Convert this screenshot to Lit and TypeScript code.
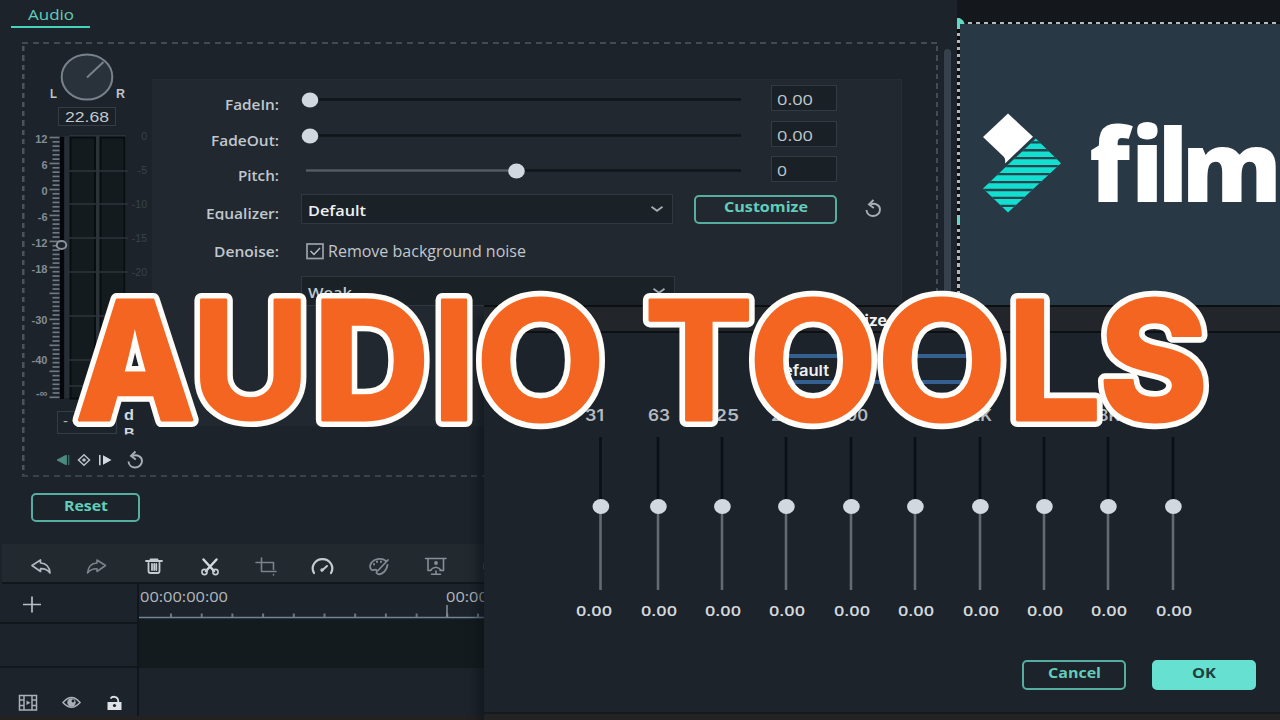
import { LitElement, html, svg, css } from "lit";
import { customElement } from "lit/decorators.js";

const pen = document.createElement("canvas").getContext("2d")!;

/* Places a glyph so that its ink fills the given box. */
function fit(ch: string, font: string, size: number, x0: number, x1: number, y0: number, y1: number) {
  pen.font = font.replace("SIZE", size + "px");
  const m = pen.measureText(ch);
  const sx = (x1 - x0) / (m.actualBoundingBoxRight + m.actualBoundingBoxLeft);
  const sy = (y1 - y0) / (m.actualBoundingBoxAscent + m.actualBoundingBoxDescent);
  const tx = x0 + m.actualBoundingBoxLeft * sx;
  const ty = y1 - m.actualBoundingBoxDescent * sy;
  return `translate(${tx} ${ty}) scale(${sx} ${sy})`;
}

/* A single text run set to an exact width; its baseline is 12px below the top of a 16px line. */
const run = (text: string, width: number, cls = "") =>
  html`<svg class="run ${cls}" width=${width} height="16"><text x="0" y="12" textLength=${width} lengthAdjust="spacingAndGlyphs">${text}</text></svg>`;

const TITLE: [string, number, number, boolean, number][] = [
  ["A", 77, 194, false, 800], ["U", 200, 301, false, 700], ["D", 320.7, 424.5, false, 800], ["I", 440.7, 468, false, 700],
  ["O", 481, 599.5, true, 700], ["T", 648.3, 749, false, 700], ["O", 754, 871.7, true, 700], ["O", 882.3, 1001, true, 700],
  ["L", 1016, 1097, false, 700], ["S", 1102.7, 1203.5, true, 800],
];

const BRAND: [string, number, number, number][] = [
  ["f", 1091, 1133, 123], ["i", 1137, 1158, 122], ["l", 1163.5, 1182, 124.5], ["m", 1187.5, 1276, 147],
];

const BANDS: [string, number][] = [
  ["31", 19], ["63", 22], ["125", 32], ["250", 32], ["500", 32], ["1K", 22], ["2K", 22], ["4K", 22], ["8K", 22], ["16K", 30],
];

const range = (n: number) => Array.from({ length: n }, (_, i) => i);

const undoArrow = svg`<g fill="none" stroke="#a9afb8" stroke-width="1.900"><path d="M5.500 5.500C10 3.500 15 6 15 10.500 15 14.500 11.500 17 8 17 4.500 17 1.800 14.500 1.500 11"/><path d="M8.500 1 4 5.500 8.800 9"/></g>`;

@customElement("app-root")
export class AppRoot extends LitElement {
  static styles = css`
    :host { display: block; width: 1280px; height: 720px; }
    * { box-sizing: border-box; }
    svg { display: block; flex: none; overflow: visible; }
    .run { font: 600 15px "Open Sans", "Noto Sans", sans-serif; fill: #c0c7ce; }
    .screen { position: relative; width: 1280px; height: 720px; overflow: hidden; background: #1c232a; display: grid; grid-template: 544px 1fr / 957px 323px; }
    .audio { padding: 7px 0 0 0; display: flex; flex-direction: column; align-items: flex-start; }
    .tab { width: 79px; height: 21px; margin-left: 11px; padding: 1px 0 0 17px; border-bottom: 2px solid #45d3b9; }
    .run.teal { fill: #62cdb9; }
    .run.tabname { font-weight: 500; font-size: 15px; }
    .body { display: flex; margin: 14px 0 0 22px; }
    .frame { width: 916px; height: 435px; padding: 1px; display: flex;
      background:
        repeating-linear-gradient(90deg, #424b54 0 6px, transparent 6px 10.7px) 0 0 / 100% 2px no-repeat,
        repeating-linear-gradient(90deg, #38424a 0 6px, transparent 6px 10.7px) 0 100% / 100% 2px no-repeat,
        repeating-linear-gradient(180deg, transparent 0 4px, #4b545d 4px 9.3px) 0 0 / 2.5px 100% no-repeat,
        repeating-linear-gradient(180deg, transparent 0 4px, #434c55 4px 9.3px) 100% 0 / 2.5px 100% no-repeat; }
    .bar { width: 7px; height: 290px; margin: 7px 0 0 6px; border-radius: 4px; background: #37404d; }
    .mixer { width: 129px; height: 433px; }
    .mixer text { font-family: "Liberation Sans", Arial, sans-serif; }
    .card { width: 750px; height: 347px; margin-top: 36px; padding-top: 3px; background: #21282f; box-shadow: inset -1px 1px #252c33; }
    .row { display: flex; align-items: center; height: 36px; }
    .row.pitch { height: 34px; }
    .row.eq { height: 42px; }
    .row.noise { height: 42px; }
    .row.level { height: 38px; }
    .name { width: 127px; display: flex; justify-content: flex-end; margin-top: 11px; height: 16px; }
    .name.up { margin-top: 3px; }
    .name.cut { overflow: hidden; height: 13px; margin-top: 8px; }
    .slider { margin-left: 22px; width: 448px; height: 16px; }
    .field { margin: 0 0 4px 22px; width: 66px; height: 26px; padding: 7px 0 0 5px; background: #1a2126; border: 1px solid #323a42; }
    .select { margin-left: 22px; width: 372px; height: 30px; padding: 0 9px 0 6px; background: #1a2127; border: 1px solid #30373e; display: flex; align-items: center; justify-content: space-between; }
    .select .run { margin-top: 6px; }
    .select.wide { width: 374px; }
    .run.white { fill: #eef0f3; }
    .btn { display: flex; justify-content: center; height: 29px; padding-top: 3px; border: 2px solid #55ae9f; border-radius: 5px; }
    .run.bold { font-weight: 700; }
    .customize { width: 143px; margin-left: 21px; }
    .again { margin: 0 0 3px 28px; }
    .check { margin-left: 27px; margin-right: 4px; }
    .check + .run { margin-top: 3px; }
    .run.plain { font-weight: 500; font-size: 15.5px; }
    .run.num { font-size: 14.5px; }
    .reset { width: 109px; margin: 16px 0 0 31px; padding-top: 4px; }

    .preview { background: #14181d; padding: 22px 0 0 0; }
    .stage { height: 283px; padding: 2px 0 0 3px;
      background:
        repeating-linear-gradient(90deg, #b5b8b8 0 4px, #0b0d10 4px 8px) 11px 0 / 100% 2px no-repeat,
        repeating-linear-gradient(180deg, #0b0d10 0 3.5px, #b5b6b4 3.5px 7px) 0 0 / 3px 100% no-repeat; }
    .canvas { height: 281px; background: #283844; }
    .brand { font-family: "Open Sans", sans-serif; font-weight: 800; font-size: 100px; fill: #fff; }

    .timeline { grid-column: 1 / 3; display: flex; flex-direction: column; }
    .tools { height: 40px; margin-left: 2px; background: #22292f; border-bottom: 2px solid #12171b; }
    .tracks { display: grid; grid-template: 40px 44px 1fr / 139px 1fr; height: 132px; }
    .head { border-right: 2px solid #10161a; border-bottom: 2px solid #11171b; }
    .head.last { border-bottom: 0; }
    .lane { background: #141b1e; }
    .floor { height: 4px; background: #242220; }
    .icons { height: 38px; }
    .ruler text { font: 500 14.5px "Open Sans", sans-serif; fill: #b3b9bf; }

    .dialog { position: absolute; left: 484px; top: 305px; width: 796px; height: 415px; background: #1c232a; box-shadow: -8px 8px 10px -2px rgba(12, 18, 24, 0.6); display: flex; flex-direction: column; }
    .title { height: 28px; border-top: 2px solid #0c1013; border-bottom: 2px solid #0c1013; background: #222529; padding: 7px 0 0 320px; }
    .run.inter { font-family: Inter, sans-serif; }
    .preset { width: 220px; height: 30px; margin: 21px 0 0 281px; border-top: 4px solid #34608f; border-bottom: 4px solid #34608f; padding: 6px 0 0 6px; }
    .bands { display: grid; grid-template-columns: repeat(10, 64.4px); margin: 25px 0 0 78px; }
    .band { display: flex; flex-direction: column; align-items: center; }
    .run.hz { font-family: Inter, "Liberation Sans", sans-serif; fill: #b3bac1; font-weight: 600; font-size: 16px; }
    .column { margin: 12px 0 13px; }
    .run.gain { fill: #d3d8dc; }
    .actions { display: flex; justify-content: flex-end; gap: 26px; margin: 40px 24px 0 0; }
    .actions .btn { width: 104px; height: 30px; padding-top: 4px; }
    .btn.ok { background: #66e0d0; border-color: #66e0d0; }
    .run.dark { fill: #20413f; }
    .edge { margin-top: auto; height: 8px; background: #232323; border-top: 2px solid #14191e; }

    .headline { position: absolute; left: 0; top: 0; font: 700 168px Inter, sans-serif; }
    .heavy { font-weight: 800; }
    .outline { fill: #fffdfa; stroke: #fffdfa; stroke-width: 14.5px; stroke-linejoin: round; }
    .fill { fill: #f46522; stroke: #f46522; stroke-width: 3px; stroke-linejoin: round; }
  `;

  private mixer() {
    const labels: [string, number][] = [["12", 139], ["6", 165], ["0", 191], ["-6", 217], ["-12", 243], ["-18", 269], ["-30", 320], ["-40", 360], ["-∞", 393]];
    const right: [string, number][] = [["0", 136], ["-5", 170], ["-10", 204], ["-15", 238], ["-20", 272]];
    return html`<svg class="mixer" viewBox="23 43 129 433">
      <ellipse cx="87" cy="77" rx="25.300" ry="22.500" fill="#29313a" stroke="#78828c" stroke-width="2"/>
      <path d="M87 77.500 103.500 62" stroke="#78828c" stroke-width="2"/>
      <g font-size="12.500" fill="#bdc3ca" font-weight="700"><text x="50" y="98" textLength="7" lengthAdjust="spacingAndGlyphs">L</text><text x="116" y="98" textLength="9" lengthAdjust="spacingAndGlyphs">R</text></g>
      <rect x="58.500" y="107.500" width="57" height="18" fill="#1a2127" stroke="#343d45"/>
      <text x="65" y="122" font-size="15" fill="#c3c9cf" textLength="44" lengthAdjust="spacingAndGlyphs">22.68</text>
      <rect x="60" y="137" width="4" height="262" fill="#05080a"/>
      <rect x="64.500" y="136" width="4.500" height="262" fill="#272e34"/>
      <rect x="69" y="135" width="57" height="263" fill="#2b3238"/>
      <rect x="70.500" y="137.500" width="24.500" height="261" fill="#141b1e" stroke="#080d10" stroke-width="2"/>
      <rect x="100.500" y="137.500" width="24" height="261" fill="#141b1e" stroke="#080d10" stroke-width="2"/>
      ${[171, 204, 238, 272, 316, 360, 386].map((y) => svg`<path d="M69 ${y}H128" stroke="#2c353b" stroke-width="1.500"/>`)}
      ${range(61).map((i) => svg`<path d="M${i % 6 ? 52.5 : 49.5} ${137.5 + i * 4.33}H59.500" stroke="#6f7982" stroke-width="1.700"/>`)}
      <g font-size="11" fill="#838c95" font-weight="700" text-anchor="end">${labels.map(([t, y]) => svg`<text x="47.500" y=${y + 3.5}>${t}</text>`)}</g>
      <g font-size="10.500" fill="#39434a" text-anchor="end">${right.map(([t, y]) => svg`<text x="147" y=${y + 3.5}>${t}</text>`)}</g>
      <ellipse cx="61.500" cy="245" rx="4.800" ry="4" fill="#1c232a" stroke="#8c959e" stroke-width="2"/>
      <rect x="57.500" y="411.500" width="59" height="22" fill="none" stroke="#333d44"/>
      <text x="63" y="426" font-size="15" fill="#a9b0b6">-</text><text x="105" y="428" font-size="15" fill="#a9b0b6">-</text>
      <text x="124" y="419.500" font-size="14.500" font-weight="700" fill="#d3d8dc" textLength="10" lengthAdjust="spacingAndGlyphs">d</text>
      <svg x="124" y="427" width="12" height="7.500" style="overflow:hidden"><text x="0" y="10" font-size="13" font-weight="700" fill="#d3d8dc" textLength="10.500" lengthAdjust="spacingAndGlyphs">B</text></svg>
      <path d="M57 460 65.500 455.500V464.500ZM66.500 455V465M68.800 455V465" fill="#4c8b80" stroke="#4c8b80" stroke-width=".9"/>
      <path d="M84 454.800 89.500 460 84 465.200 78.500 460Z" fill="none" stroke="#b9bfc5" stroke-width="1.500"/><path d="M84 458 86.300 460 84 462 81.700 460Z" fill="#b9bfc5"/>
      <path d="M99.800 455V465.300" stroke="#d5d9dd" stroke-width="1.500"/><path d="M103 455.300 111.500 460 103 464.700Z" fill="#d5d9dd"/>
      <g transform="translate(127 450.500)">${undoArrow}</g>
    </svg>`;
  }

  private slider(pos: number, filled: boolean) {
    return html`<svg class="slider" viewBox="0 0 448 16">
      <path d="M6 7.500H440" stroke="#0f1519" stroke-width="2.500"/>
      ${filled ? svg`<path d="M5 7.500H${pos}" stroke="#555d67" stroke-width="2.600"/>` : ""}
      <ellipse cx=${pos} cy="8" rx="8.300" ry="7.500" fill="#d2d8e0"/></svg>`;
  }

  private chevron() {
    return html`<svg width="12" height="6"><path d="M.5.800 6 4.800 11.500.800" fill="none" stroke="#a4abb3" stroke-width="1.800"/></svg>`;
  }

  private toolbar() {
    return html`<svg class="icons" width="484" height="38" viewBox="2 544 484 38">
      <g fill="none" stroke-linejoin="round" stroke-linecap="round">
        <path d="M32 565.500 40.500 560V563C46 563.300 49.500 567 50 573 47.500 569.500 45 568.500 40.500 568.700V571.500Z" stroke="#b2b8bf" stroke-width="1.700"/>
        <path d="M105.500 565.500 97 560V563C91.500 563.300 88 567 87.500 573 90 569.500 92.500 568.500 97 568.700V571.500Z" stroke="#7b838b" stroke-width="1.600"/>
        <path d="M146 561H162M150.500 560V559.500H157.500V560M148.500 563V571Q148.500 573 150.500 573H157.500Q159.500 573 159.500 571V563M152 564V570M154.200 564V570M156.300 564V570" stroke="#c6ccd2" stroke-width="1.800"/>
        <path d="M203.500 559.500 214 571M216.500 559.500 206 571" stroke="#d4d9de" stroke-width="2.500"/>
        <circle cx="204.500" cy="572" r="2.600" stroke="#c6ccd2" stroke-width="1.600"/><circle cx="215.500" cy="572" r="2.600" stroke="#c6ccd2" stroke-width="1.600"/>
        <path d="M256 562.500H273.500V569.500M261.500 558V571.500H276M273.500 574.500V575" stroke="#7a828a" stroke-width="1.600"/>
        <path d="M314 573A9.800 9.300 0 1 1 331 573" stroke="#c6ccd2" stroke-width="2.200"/><path d="M322 570.500 327 566" stroke="#c6ccd2" stroke-width="2"/><circle cx="322" cy="570" r="1.700" fill="#c6ccd2"/>
        <path d="M386 561C382 557.500 375 558.500 371.500 562.500 368.500 567 371 571 374 569.800 377 569 377 571 376.500 573 379 576 386 573 387.500 565M388 560 378 570.500" stroke="#828a92" stroke-width="1.800"/>
        <path d="M374 564.500V564M377 562V561.500M381 562V561.500" stroke="#828a92" stroke-width="2"/>
        <path d="M425.500 558.500H446M428 559V570.500H431M440 570.500H443.500V559M430 570.500Q436 564 441.500 570.500M436 571V574M431.500 574.300H440.500" stroke="#878f97" stroke-width="1.600"/><circle cx="436" cy="563" r="1.900" fill="#878f97"/>
        <path d="M484.500 564V569" stroke="#757d85" stroke-width="2"/>
      </g></svg>`;
  }

  private logo() {
    return html`<svg width="320" height="281" viewBox="960 24 320 281">
      <path d="M1008 113.500 1033 136.800 1005 163.500Q1005.800 158 1003.500 156.500L983 137Z" fill="#fff"/>
      <clipPath id="para"><path d="M1035.800 138.500 1061 163.300 1008 212.500 983 188.500Z"/></clipPath>
      <g clip-path="url(#para)"><path d="M980 135H1064V215H980Z" fill="#12dfcf"/>
      ${range(9).map((i) => svg`<path d="M980 ${142.3 + i * 7.95}H1064" stroke="#21414b" stroke-width="2.300"/>`)}</g>
      <g class="brand">${BRAND.map(([c, a, b, top]) => svg`<text transform=${fit(c, '800 SIZE "Open Sans"', 100, a, b, top, 201.5)}>${c}</text>`)}</g>
      <path d="M957 18H959.500Q964 20 964.500 24H960V28H957ZM957 217H960V224H957Z" fill="#5fd8c6"/>
    </svg>`;
  }

  private band(label: string, w: number, i: number) {
    const cx = i === 0 ? 38.5 : 31;
    return html`<div class="band">${run(label, w, "hz")}
      <svg class="column" width="64" height="154"><path d="M${cx} 0V70" stroke="#0b1014" stroke-width="2.600"/><path d="M${cx} 70V153" stroke="#636a73" stroke-width="2.600"/><ellipse cx=${cx + 0.4} cy="69.500" rx="8.300" ry="7.400" fill="#d2d8e0"/></svg>
      ${run("0.00", 36, "gain")}</div>`;
  }

  private glyphs() {
    return TITLE.map(([c, a, b, round, weight]) => svg`<text class=${weight === 800 ? "heavy" : ""} transform=${fit(c, weight + " SIZE Inter", 168, a + 1.5, b - 1.5, round ? 297.5 : 300, round ? 422 : 419.5)}>${c}</text>`);
  }

  render() {
    return html`<div class="screen">
      <section class="audio">
        <div class="tab">${run("Audio", 46, "teal tabname")}</div>
        <div class="body">
          <div class="frame">
            ${this.mixer()}
            <div class="card">
              <div class="row"><div class="name">${run("FadeIn:", 54)}</div>${this.slider(9, false)}<div class="field">${run("0.00", 36, "plain num")}</div></div>
              <div class="row"><div class="name">${run("FadeOut:", 68)}</div>${this.slider(9, false)}<div class="field">${run("0.00", 36, "plain num")}</div></div>
              <div class="row pitch"><div class="name">${run("Pitch:", 41)}</div>${this.slider(215.5, true)}<div class="field">${run("0", 10, "plain num")}</div></div>
              <div class="row eq"><div class="name cut">${run("Equalizer:", 73)}</div>
                <div class="select">${run("Default", 58, "white")}${this.chevron()}</div>
                <div class="btn customize">${run("Customize", 84, "teal bold")}</div>
                <svg class="again" width="16" height="17">${undoArrow}</svg></div>
              <div class="row noise"><div class="name up">${run("Denoise:", 65)}</div>
                <svg class="check" width="18" height="16"><rect x="1" y="1" width="16" height="14.500" fill="none" stroke="#9aa2aa" stroke-width="1.700"/><path d="M4.500 8 8 11.500 14 5" fill="none" stroke="#b6bcc2" stroke-width="1.500"/></svg>
                ${run("Remove background noise", 198, "plain")}</div>
              <div class="row level"><div class="name"></div><div class="select wide">${run("Weak", 44)}${this.chevron()}</div></div>
            </div>
          </div>
          <div class="bar"></div>
        </div>
        <div class="btn reset">${run("Reset", 44, "teal bold")}</div>
      </section>

      <section class="preview"><div class="stage"><div class="canvas">${this.logo()}</div></div></section>

      <section class="timeline">
        <div class="tools">${this.toolbar()}</div>
        <div class="tracks">
          <div class="head"><svg width="60" height="36" viewBox="0 584 60 36"><path d="M23 604.500H41M32 596.500V612.500" stroke="#b9bfc5" stroke-width="1.700"/></svg></div>
          <svg class="ruler" width="345" height="38" viewBox="139 584 345 38">
            <text x="140" y="602" textLength="88" lengthAdjust="spacingAndGlyphs">00:00:00:00</text>
            <text x="446" y="602" textLength="88" lengthAdjust="spacingAndGlyphs">00:00:05:00</text>
            <rect x="139" y="618.500" width="345" height="6" fill="#141b1e"/>
            <path d="M139 617.500H484" stroke="#6d8496" stroke-width="1.600"/>
            ${range(11).map((i) => svg`<path d="M${171 + i * 30.7} 613.500V617" stroke="#6e7880" stroke-width="2"/>`)}
            <path d="M447 605V617" stroke="#87919a" stroke-width="1.500"/>
          </svg>
          <div class="head"></div><div class="lane"></div>
          <div class="head last"><svg width="138" height="48" viewBox="0 668 138 48">
            <path d="M19.500 695.500H36.500V710H19.500ZM24 695.500V710M32 695.500V710M19.500 700H24M19.500 705.500H24M32 700H36.500M32 705.500H36.500" fill="none" stroke="#a9b0b7" stroke-width="1.500"/><path d="M26.500 700.500 30.500 702.800 26.500 705Z" fill="#a9b0b7"/>
            <path d="M63 702.500Q71.500 692.500 80 702.500 71.500 712 63 702.500Z" fill="none" stroke="#a9b0b7" stroke-width="1.600"/><circle cx="71.500" cy="702.500" r="4.200" fill="#a9b0b7"/><circle cx="73" cy="701" r="1.400" fill="#1c232a"/>
            <path d="M107.500 702H121.500V710H107.500Z" fill="#dfe3e7"/><path d="M110.500 698.500Q112 696.500 114.500 696.800 118.500 697.300 118.300 702" fill="none" stroke="#dfe3e7" stroke-width="1.800"/><circle cx="114.500" cy="705.500" r="1.600" fill="#1c232a"/>
          </svg></div><div></div>
        </div>
        <div class="floor"></div>
      </section>

      <section class="dialog">
        <div class="title">${run("Customize", 83, "white inter bold")}</div>
        <div class="preset">${run("Default", 58, "white inter")}</div>
        <div class="bands">${BANDS.map(([t, w], i) => this.band(t, w, i))}</div>
        <div class="actions">
          <div class="btn">${run("Cancel", 53, "teal bold")}</div>
          <div class="btn ok">${run("OK", 24, "dark bold")}</div>
        </div>
        <div class="edge"></div>
      </section>

      <svg class="headline" width="1280" height="720"><use class="outline" href="#letters"/><g class="fill"><g id="letters">${this.glyphs()}</g></g></svg>
    </div>`;
  }
}
